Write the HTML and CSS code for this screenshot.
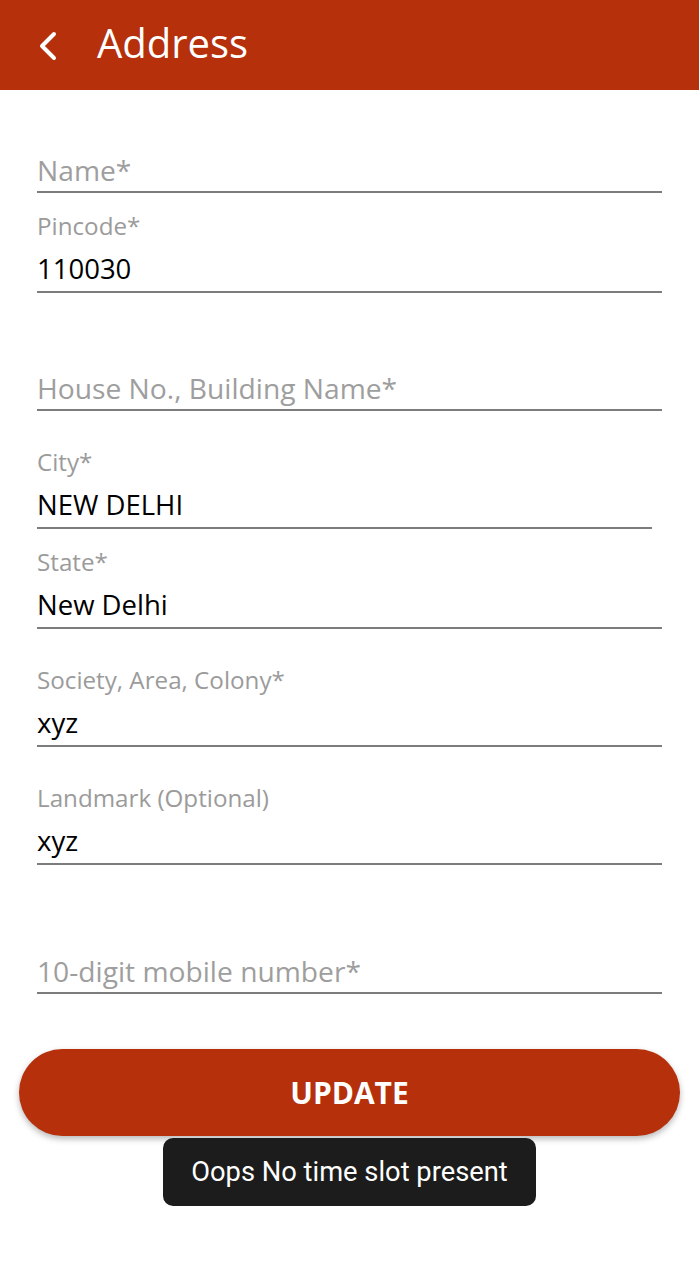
FILE: index.html
```html
<!DOCTYPE html>
<html>
<head>
<meta charset="utf-8">
<link rel="stylesheet" href="styles.css">
</head>
<body>
<header class="appbar">
  <svg class="back" width="24" height="30" viewBox="0 0 24 30"><path d="M17 3 L5 15 L17 27" fill="none" stroke="#fff" stroke-width="4" stroke-linecap="round" stroke-linejoin="round"/></svg>
  <h1 class="title">Address</h1>
</header>
<main class="form">
  <div class="field first">
    <div class="label"></div>
    <div class="value placeholder">Name*</div>
  </div>
  <div class="field gap-s">
    <div class="label">Pincode*</div>
    <div class="value">110030</div>
  </div>
  <div class="field gap-l">
    <div class="label"></div>
    <div class="value placeholder">House No., Building Name*</div>
  </div>
  <div class="field gap-l narrow">
    <div class="label">City*</div>
    <div class="value">NEW DELHI</div>
  </div>
  <div class="field gap-s">
    <div class="label">State*</div>
    <div class="value">New Delhi</div>
  </div>
  <div class="field gap-l">
    <div class="label">Society, Area, Colony*</div>
    <div class="value">xyz</div>
  </div>
  <div class="field gap-l">
    <div class="label">Landmark (Optional)</div>
    <div class="value">xyz</div>
  </div>
  <div class="field gap-xl">
    <div class="label"></div>
    <div class="value placeholder">10-digit mobile number*</div>
  </div>
</main>
<div class="actions">
  <button class="update">UPDATE</button>
  <div class="toast">Oops No time slot present</div>
</div>
</body>
</html>
```
FILE: styles.css
```css
html, body {
  margin: 0;
  padding: 0;
  background: #fff;
}
body {
  width: 699px;
  font-family: "Open Sans", "Noto Sans", sans-serif;
}
.appbar {
  height: 90px;
  background: #b5300b;
  display: flex;
  align-items: center;
  box-sizing: border-box;
  padding-left: 37px;
}
.back {
  display: block;
  margin-top: 1px;
}
.title {
  margin: 0 0 0 36px;
  color: #fff;
  font-size: 40px;
  font-weight: 500;
  line-height: 1;
  padding-bottom: 4px;
}
.form {
  padding: 0 37px;
}
.field {
  border-bottom: 2px solid #7c7c7c;
}
.field.first { margin-top: 23px; }
.field.gap-s { margin-top: 20px; }
.field.gap-l { margin-top: 38px; }
.field.gap-xl { margin-top: 49px; }
.field.narrow { margin-right: 10px; }
.label {
  height: 26px;
  line-height: 26px;
  margin-bottom: 10px;
  font-size: 24.2px;
  color: #9b9b9b;
}
.value {
  height: 40px;
  line-height: 40px;
  padding-bottom: 2px;
  font-size: 27.5px;
  font-weight: 500;
  color: #000;
}
.value.placeholder {
  color: #9e9e9e;
  font-weight: 400;
  font-size: 28.2px;
  line-height: 42px;
}
.actions {
  display: flex;
  flex-direction: column;
  align-items: center;
  padding-top: 55px;
}
.update {
  width: 661px;
  height: 87px;
  border: none;
  border-radius: 44px;
  background: #b5300b;
  color: #fff;
  font-family: "Open Sans", sans-serif;
  font-weight: 700;
  font-size: 30px;
  box-shadow: 0 3px 6px rgba(0,0,0,0.28);
  padding: 0;
}
.toast {
  margin-top: 2px;
  width: 373px;
  height: 68px;
  box-sizing: border-box;
  background: #1c1c1c;
  border-radius: 10px;
  color: #fff;
  font-family: Roboto, sans-serif;
  font-size: 27.3px;
  display: flex;
  align-items: center;
  justify-content: center;
}
```
